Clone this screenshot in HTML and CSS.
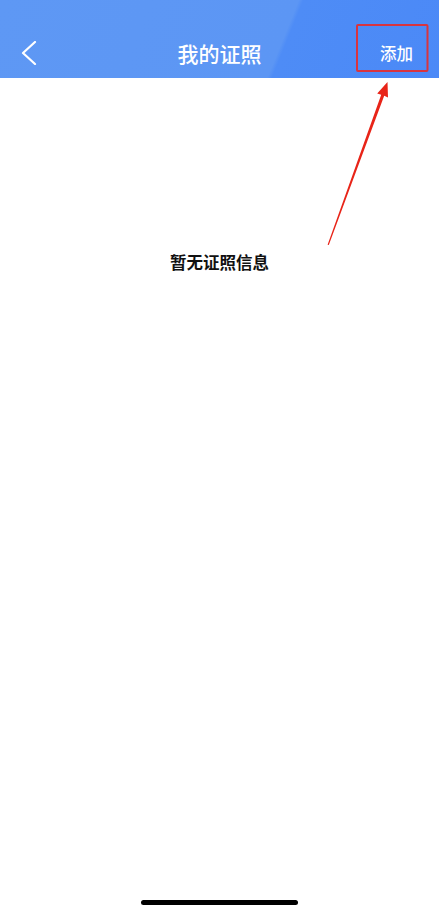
FILE: index.html
```html
<!DOCTYPE html>
<html lang="zh-CN">
<head>
<meta charset="utf-8">
<title>我的证照</title>
<link rel="stylesheet" href="styles.css">
</head>
<body>
<div class="page">
  <header class="navbar">
    <div class="nav-row">
      <button class="nav-back" aria-label="返回">
        <svg width="16" height="24" viewBox="0 0 16 24"><polyline points="14,1 2,12 14,23" fill="none" stroke="#fff" stroke-width="2.2" stroke-linecap="round" stroke-linejoin="round"/></svg>
      </button>
      <h1 class="nav-title">我的证照</h1>
      <span class="nav-action">添加</span>
    </div>
  </header>
  <main class="content">
    <p class="empty">暂无证照信息</p>
  </main>
  <footer class="home-area"><span class="home-bar"></span></footer>
  <svg class="annotation" width="439" height="914" viewBox="0 0 439 914">
    <rect x="357" y="25" width="70.5" height="46" fill="none" stroke="#d8343f" stroke-width="2" rx="1"/>
    <polygon points="387.5,82 388,97.5 384.2,95.8 328.8,245 327.6,244.8 381.2,94.7 377.2,93.6" fill="#e82418"/>
  </svg>
</div>
</body>
</html>
```
FILE: styles.css
```css
* { box-sizing: border-box; }
html, body { margin: 0; padding: 0; background: #fff; }
body { font-family: "Noto Sans CJK SC", "Noto Sans", sans-serif; }
.page {
  position: relative;
  width: 439px;
  height: 914px;
  display: flex;
  flex-direction: column;
  overflow: hidden;
}
.navbar {
  height: 78px;
  padding-top: 28px;
  background: linear-gradient(112deg, #5e98f4 0%, #5c96f4 63.5%, #4e8cf6 64.5%, #4b89f7 100%);
  flex: none;
}
.nav-row {
  height: 50px;
  display: flex;
  align-items: center;
  justify-content: space-between;
  position: relative;
  padding: 0 26px 0 21px;
}
.nav-back {
  background: none;
  border: 0;
  padding: 0;
  width: 16px;
  height: 24px;
  display: flex;
}
.nav-title {
  position: absolute;
  left: 0;
  right: 0;
  text-align: center;
  margin: 0;
  font-size: 21px;
  font-weight: 500;
  color: #fff;
  line-height: 50px;
  pointer-events: none;
}
.nav-action {
  color: #fff;
  font-size: 16.5px;
  font-weight: 500;
  line-height: 50px;
}
.content {
  flex: 1;
  display: flex;
  justify-content: center;
  padding-top: 172px;
}
.empty {
  margin: 0;
  font-size: 16.5px;
  font-weight: 700;
  color: #111;
  line-height: 24px;
}
.home-area {
  height: 14px;
  display: flex;
  justify-content: center;
  flex: none;
}
.home-bar {
  width: 157px;
  height: 5px;
  border-radius: 3px;
  background: #000;
}
.annotation {
  position: absolute;
  top: 0;
  left: 0;
  pointer-events: none;
}
```
